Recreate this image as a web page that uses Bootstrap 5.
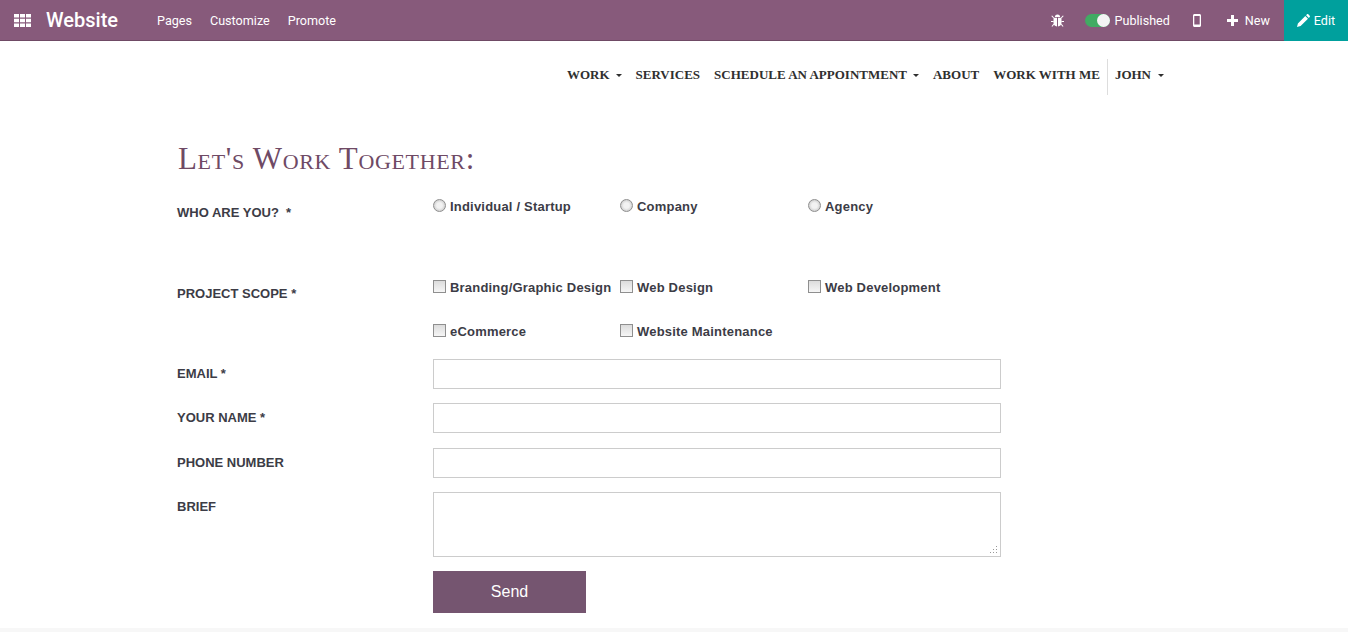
<!DOCTYPE html>
<html lang="en">
<head>
  <meta charset="UTF-8" />
  <meta name="viewport" content="width=device-width, initial-scale=1.0" />
  <title>Let's Work Together</title>
  <link href="https://cdn.jsdelivr.net/npm/bootstrap@5.3.0/dist/css/bootstrap.min.css" rel="stylesheet">
  <style>
    body {
      background-color: #fff;
      color: #3c3c46;
      font-family: "Liberation Sans", Arial, sans-serif;
      height: 632px;
      overflow: hidden;
    }
    .odoo-bar {
      height: 41px;
      background-color: #875a7b;
      border-bottom: 1px solid #6f4a65;
      font-family: Roboto, sans-serif;
      font-size: 12.6px;
      line-height: 20px;
      color: #fff;
    }
    .odoo-bar svg { display: block; fill: #fff; }
    .apps-btn { width: 46px; padding-left: 14px; }
    .app-title { font-size: 20px; font-weight: 500; width: 111px; }
    .bar-text { padding-top: 2px; }
    .bar-link { margin-right: 18px; }
    .bug-icon { margin-right: 21px; }
    .toggle-pill {
      width: 25px;
      height: 13px;
      border-radius: 7px;
      background-color: #41ab63;
      position: relative;
      margin-right: 5px;
    }
    .toggle-pill::after {
      content: "";
      position: absolute;
      right: 0;
      top: 0;
      width: 13px;
      height: 13px;
      border-radius: 50%;
      background-color: #f4f4f4;
    }
    .phone-icon { margin-left: 23px; margin-right: 26px; }
    .plus-icon { margin-right: 7px; }
    .edit-btn {
      width: 64px;
      height: 41px;
      background-color: #00a09d;
      margin-left: 14px;
    }
    .site-wrap { width: 994px; margin-left: 177px; }
    .site-menu { height: 68px; padding-right: 7px; }
    .site-menu a {
      font-family: "Liberation Serif", serif;
      font-weight: 700;
      font-size: 13px;
      color: #2f2f2f;
      text-decoration: none;
      text-transform: uppercase;
      margin-left: 14px;
    }
    .menu-caret {
      display: inline-block;
      margin-left: 6px;
      vertical-align: 2px;
      border-top: 3px solid #2f2f2f;
      border-left: 3px solid transparent;
      border-right: 3px solid transparent;
    }
    .john-link .menu-caret { margin-left: 7px; }
    .menu-sep { width: 1px; height: 36px; background-color: #ddd; margin: 4px -7px 0 7px; }
    .form-title {
      font-family: "Liberation Serif", serif;
      font-variant: small-caps;
      font-weight: 400;
      font-size: 31px;
      letter-spacing: .65px;
      line-height: 36px;
      color: #6f4a65;
      margin: 32px 0 0 1px;
    }
    .contact-form { width: 824px; margin-top: 17px; display: grid; grid-template-columns: 256px 568px; }
    .field-name { font-size: 13px; font-weight: 700; line-height: 20px; padding-top: 5px; }
    .who-name { padding-top: 9px; }
    .scope-name { margin-top: 43px; padding-top: 0; }
    .opt-grid { display: grid; grid-template-columns: 187px 188px 193px; }
    .who-opts { padding-top: 3px; grid-template-rows: 44px; }
    .scope-opts { margin-top: 37px; grid-template-rows: 44px 37px; }
    .opt-item {
      display: flex;
      align-items: flex-start;
      font-size: 13px;
      font-weight: 700;
      letter-spacing: .2px;
      line-height: 20px;
      margin: 0;
    }
    .opt-item input {
      appearance: none;
      width: 13px;
      height: 13px;
      margin: 2px 4px 0 0;
      border: 1px solid #8f8f8f;
      background: linear-gradient(#dcdcdc, #f6f6f6);
      flex: none;
    }
    .opt-item input[type=radio] {
      border-radius: 50%;
      background: radial-gradient(circle, #f2f2f2 35%, #b8b8b8);
    }
    .input-cell { margin-bottom: 14.4px; }
    .site-input {
      display: block;
      width: 568px;
      height: 30px;
      border: 1px solid #ccc;
      background-color: #fff;
    }
    textarea.site-input { height: 65px; resize: none; }
    .brief-cell { position: relative; margin-bottom: 14px; }
    .resize-dots { position: absolute; right: 3px; bottom: 3px; fill: #999; }
    .send-btn {
      width: 153px;
      height: 42px;
      background-color: #755570;
      color: #fff;
      border: 0;
      border-radius: 0;
      font-size: 16px;
      padding: 0;
    }
    .page-foot { height: 4px; background-color: #f7f7f7; margin-top: 15px; }
  </style>
</head>
<body>
  <div class="odoo-bar d-flex align-items-center">
    <div class="apps-btn">
      <svg width="17" height="13" viewBox="0 0 17 13"><path d="M0 0h5v3.4H0zM6 0h5v3.4H6zM12 0h5v3.4h-5zM0 4.8h5v3.4H0zM6 4.8h5v3.4H6zM12 4.8h5v3.4h-5zM0 9.6h5V13H0zM6 9.6h5V13H6zM12 9.6h5V13h-5z"/></svg>
    </div>
    <div class="app-title">Website</div>
    <div class="bar-link bar-text">Pages</div>
    <div class="bar-link bar-text">Customize</div>
    <div class="bar-link bar-text">Promote</div>
    <div class="ms-auto d-flex align-items-center">
      <svg class="bug-icon" width="13" height="13" viewBox="0 0 13 13"><path d="M3.900 3a2.600 2.600 0 0 1 5.200 0zM3.200 3.800H6V12.500C3.800 12.300 2.500 10.800 2.500 9V4.500c0-.4.300-.7.700-.7zM7 3.800h2.800c.4 0 .7.300.7.700V9c0 1.800-1.300 3.300-3.500 3.500zM.3 2l.8-.6 1.900 2.200-.6.700zM12.700 2l-.8-.6L10 3.600l.6.700zM0 7h2.300v1H0zM10.700 7H13v1h-2.300zM.5 12.200l2-2.400.7.600-1.900 2.400zM12.500 12.200l-2-2.400-.7.600 1.900 2.400z"/></svg>
      <div class="toggle-pill"></div>
      <div class="bar-text">Published</div>
      <svg class="phone-icon" width="8" height="13" viewBox="0 0 8 13"><path fill-rule="evenodd" d="M1.500 0h5C7.300 0 8 .7 8 1.500v10c0 .8-.7 1.500-1.500 1.500h-5C.7 13 0 12.300 0 11.500v-10C0 .7.700 0 1.500 0zM1.300 2v8.500h5.400V2z"/></svg>
      <svg class="plus-icon" width="11" height="11" viewBox="0 0 11 11"><path d="M4 0h3v4h4v3H7v4H4V7H0V4h4z"/></svg>
      <div class="bar-text">New</div>
      <div class="edit-btn d-flex align-items-center justify-content-center gap-1">
        <svg width="13" height="13" viewBox="0 0 13 13"><path d="M0 13l.9-3.600L8.300 2l2.700 2.700-7.400 7.400zM9.100 1.200 10 .3c.4-.4.900-.4 1.300 0l1.400 1.400c.4.400.4.900 0 1.300l-.9.900z"/></svg>
        <span class="bar-text">Edit</span>
      </div>
    </div>
  </div>

  <div class="site-wrap">
    <div class="site-menu d-flex align-items-center justify-content-end">
      <a href="#">Work<span class="menu-caret"></span></a>
      <a href="#">Services</a>
      <a href="#">Schedule an appointment<span class="menu-caret"></span></a>
      <a href="#">About</a>
      <a href="#">Work with me</a>
      <div class="menu-sep"></div>
      <a class="john-link" href="#">John<span class="menu-caret"></span></a>
    </div>

    <h1 class="form-title">Let's Work Together:</h1>

    <form class="contact-form">
      <div class="field-name who-name">WHO ARE YOU? &nbsp;*</div>
      <div class="opt-grid who-opts">
        <label class="opt-item"><input type="radio" name="who">Individual / Startup</label>
        <label class="opt-item"><input type="radio" name="who">Company</label>
        <label class="opt-item"><input type="radio" name="who">Agency</label>
      </div>

      <div class="field-name scope-name">PROJECT SCOPE *</div>
      <div class="opt-grid scope-opts">
        <label class="opt-item"><input type="checkbox">Branding/Graphic Design</label>
        <label class="opt-item"><input type="checkbox">Web Design</label>
        <label class="opt-item"><input type="checkbox">Web Development</label>
        <label class="opt-item"><input type="checkbox">eCommerce</label>
        <label class="opt-item"><input type="checkbox">Website Maintenance</label>
      </div>

      <div class="field-name">EMAIL *</div>
      <div class="input-cell"><input class="site-input" type="text"></div>
      <div class="field-name">YOUR NAME *</div>
      <div class="input-cell"><input class="site-input" type="text"></div>
      <div class="field-name">PHONE NUMBER</div>
      <div class="input-cell"><input class="site-input" type="text"></div>
      <div class="field-name">BRIEF</div>
      <div class="brief-cell">
        <textarea class="site-input"></textarea>
        <svg class="resize-dots" width="8" height="8" viewBox="0 0 8 8"><path d="M6 0h1v1H6zM6 3h1v1H6zM3 3h1v1H3zM6 6h1v1H6zM3 6h1v1H3zM0 6h1v1H0z"/></svg>
      </div>
      <div></div>
      <div><button class="send-btn btn" type="button">Send</button></div>
    </form>
  </div>
  <div class="page-foot"></div>
  <script src="https://cdn.jsdelivr.net/npm/bootstrap@5.3.0/dist/js/bootstrap.bundle.min.js"></script>
</body>
</html>
